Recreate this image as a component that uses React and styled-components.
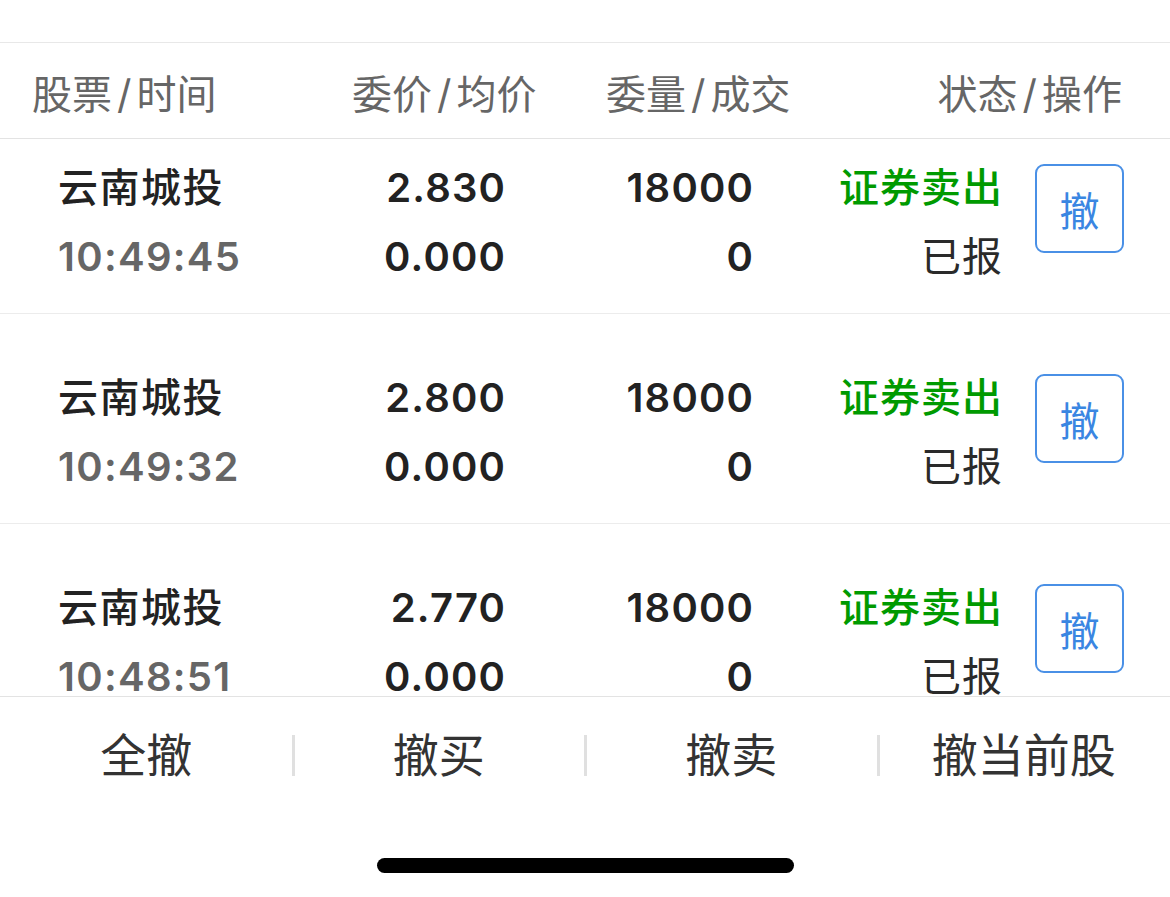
import styled, { createGlobalStyle } from "styled-components";

const GlobalStyle = createGlobalStyle`
  html, body {
    margin: 0;
    padding: 0;
    background: #fff;
  }
  body {
    font-family: Inter, "Noto Sans CJK SC", "Noto Sans", sans-serif;
  }
`

const orders = [
  { name: "云南城投", time: "10:49:45", price: "2.830", avg: "0.000", qty: "18000", done: "0", type: "证券卖出", status: "已报" },
  { name: "云南城投", time: "10:49:32", price: "2.800", avg: "0.000", qty: "18000", done: "0", type: "证券卖出", status: "已报" },
  { name: "云南城投", time: "10:48:51", price: "2.770", avg: "0.000", qty: "18000", done: "0", type: "证券卖出", status: "已报" },
  { name: "云南城投", time: "10:48:20", price: "2.750", avg: "0.000", qty: "18000", done: "0", type: "证券卖出", status: "已报" },
]

const columns = [["股票", "时间"], ["委价", "均价"], ["委量", "成交"], ["状态", "操作"]]

const actions = ["全撤", "撤买", "撤卖", "撤当前股"]

const App = () => {
  return (
    <Page>
      <GlobalStyle />
      <TopSpace />
      <Header>
        {columns.map(([a, b], i) => (
          <HeadCell key={a} $right={i === 3}>
            {a}<Slash>/</Slash>{b}
          </HeadCell>
        ))}
      </Header>
      <List>
        <Scroller>
          {orders.map((o, i) => (
            <Row key={i}>
              <Cells>
                <Cell>
                  <Name>{o.name}</Name>
                  <Time>{o.time}</Time>
                </Cell>
                <Cell $right>
                  <Num>{o.price}</Num>
                  <Num>{o.avg}</Num>
                </Cell>
                <Cell $right>
                  <Num>{o.qty}</Num>
                  <Num>{o.done}</Num>
                </Cell>
                <Cell $right>
                  <Kind>{o.type}</Kind>
                  <Status>{o.status}</Status>
                </Cell>
              </Cells>
              <CancelBtn>撤</CancelBtn>
            </Row>
          ))}
        </Scroller>
      </List>
      <ActionBar>
        {actions.map((a, i) => (
          <Action key={a} $sep={i > 0}>{a}</Action>
        ))}
      </ActionBar>
      <HomeArea>
        <HomeBar />
      </HomeArea>
    </Page>
  )
}

const Page = styled.div`
  width: 1170px;
  height: 897px;
  display: flex;
  flex-direction: column;
  background: #fff;
  overflow: hidden;
`
const TopSpace = styled.div`
  height: 42px;
  flex-shrink: 0;
  border-bottom: 1px solid #e8e8e8;
`
const Header = styled.div`
  height: 95px;
  flex-shrink: 0;
  display: grid;
  grid-template-columns: 320px 254px 1fr auto;
  align-items: center;
  padding: 0 48px 0 32px;
  border-bottom: 1px solid #e3e3e3;
`
const HeadCell = styled.div`
  font-size: 40px;
  color: #666;
  text-align: ${(p) => (p.$right ? "right" : "left")};
  line-height: 1;
  padding-top: 8px;
  white-space: nowrap;
`
const Slash = styled.span`
  margin: 0 5px;
`
const List = styled.div`
  height: 557px;
  flex-shrink: 0;
  overflow: hidden;
`
const Scroller = styled.div`
  margin-top: -35px;
`
const Row = styled.div`
  height: 210px;
  box-sizing: border-box;
  display: flex;
  align-items: center;
  padding: 0 46px 0 58px;
  border-bottom: 1px solid #ececec;
`
const Cells = styled.div`
  display: grid;
  grid-template-columns: 250px 197px 248px 249px;
  margin-top: 27px;
`
const Cell = styled.div`
  display: flex;
  flex-direction: column;
  align-items: ${(p) => (p.$right ? "flex-end" : "flex-start")};
  & > div {
    height: 69px;
    line-height: 69px;
    font-size: 40px;
    white-space: nowrap;
  }
`
const Name = styled.div`
  color: #222;
  font-weight: 500;
  letter-spacing: 1.5px;
`
const Time = styled.div`
  color: #666;
  font-weight: 600;
  letter-spacing: 1.3px;
`
const Num = styled.div`
  color: #222;
  font-weight: 600;
  letter-spacing: 1.2px;
  margin-right: -1.2px;
`
const Kind = styled.div`
  color: #009a00;
  font-weight: 500;
  letter-spacing: 1px;
  margin-right: -1px;
`
const Status = styled.div`
  color: #2a2a2a;
  letter-spacing: 1px;
  margin-right: -1px;
`
const CancelBtn = styled.button`
  margin-left: 33px;
  width: 89px;
  height: 89px;
  box-sizing: border-box;
  border: 2px solid #4a90e6;
  border-radius: 9px;
  background: #fff;
  color: #3a86e2;
  font-family: "Noto Sans CJK SC", sans-serif;
  font-size: 40px;
  padding: 0;
  display: flex;
  align-items: center;
  justify-content: center;
`
const ActionBar = styled.div`
  height: 115px;
  flex-shrink: 0;
  border-top: 1px solid #e3e3e3;
  display: grid;
  grid-template-columns: repeat(4, 1fr);
  align-items: center;
  padding-bottom: 2px;
`
const Action = styled.div`
  position: relative;
  text-align: center;
  font-size: 46px;
  color: #333;
  line-height: 60px;
  &::before {
    content: "";
    display: ${(p) => (p.$sep ? "block" : "none")};
    position: absolute;
    left: -1px;
    top: 10px;
    width: 3px;
    height: 41px;
    background: #e0e0e0;
  }
`
const HomeArea = styled.div`
  flex: 1;
  display: flex;
  justify-content: center;
  padding-top: 44px;
`
const HomeBar = styled.div`
  width: 417px;
  height: 15px;
  border-radius: 8px;
  background: #000;
`

export default App
